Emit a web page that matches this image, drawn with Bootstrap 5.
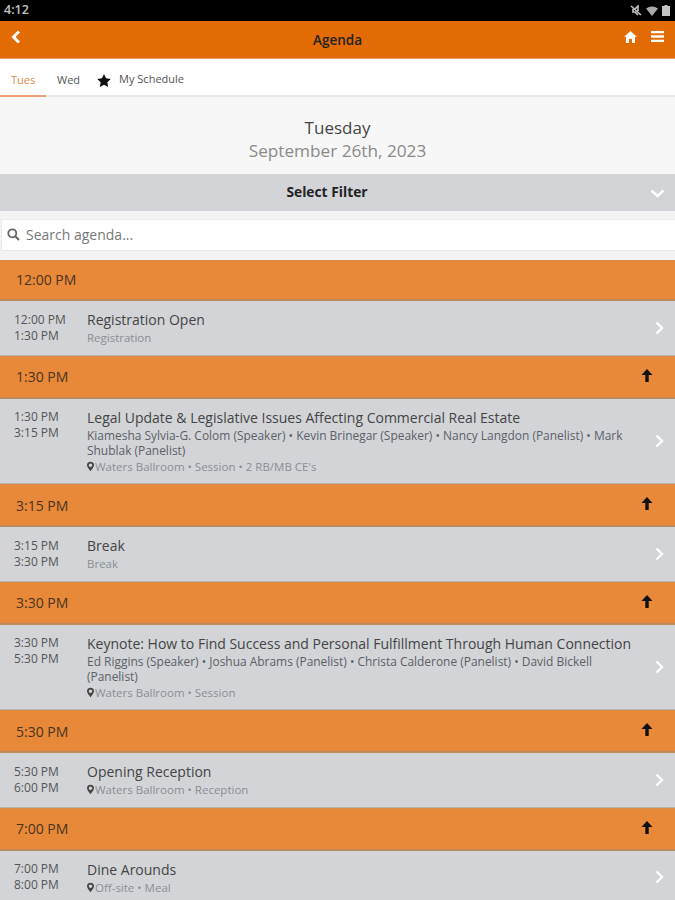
<!DOCTYPE html>
<html lang="en">
<head>
    <meta charset="UTF-8">
    <meta name="viewport" content="width=device-width, initial-scale=1.0">
    <title>Agenda</title>
    <link href="https://cdn.jsdelivr.net/npm/bootstrap@5.3.0/dist/css/bootstrap.min.css" rel="stylesheet">
    <style>
        html, body { height: 900px; overflow: hidden; }
        body { font-family: "Open Sans", "Liberation Sans", sans-serif; background: #f5f5f5; color: #333; }
        .status-strip { height: 21px; background: #000; color: #c4c4c4; font-size: 12.5px; font-weight: 600; padding: 0 5px 0 4px; }
        .app-head { height: 38px; background: #e36b03; color: #222; font-size: 13.5px; font-weight: 600; border-bottom: 1px solid #ee9f66; padding: 0 11px 6px; position: relative; }
        .app-head .head-title { position: absolute; left: 0; right: 0; text-align: center; top: 9px; line-height: 20px; }
        .tab-strip { height: 38px; background: #fff; border-bottom: 2px solid #e8e8e8; font-size: 11px; color: #555; }
        .tab-item { height: 38px; padding: 0 12px 0 11px; line-height: 41px; }
        .tab-on { width: 46px; color: #e08a4a; border-bottom: 2px solid #eb9e73; }
        .tab-star { padding-left: 5px; }
        .date-box { height: 77px; padding-top: 19px; background: #f7f7f7; text-align: center; line-height: 23px; }
        .date-day { font-size: 17px; color: #444; }
        .date-full { font-size: 17.2px; color: #8a8a8a; }
        .filter-bar { height: 37px; background: #d2d4d8; color: #222; font-size: 13.8px; font-weight: 700; padding: 0 21px 0 0; position: relative; }
        .filter-bar svg { position: absolute; right: 10px; top: 15px; }
        .search-wrap { height: 49px; padding: 8px 0 9px 1px; background: #f4f4f4; }
        .search-field { height: 32px; background: #fff; border: 1px solid #eaeaea; border-right: 0; padding: 0 5px 2px; color: #777; font-size: 14px; gap: 6px; }
        .time-band { height: 43px; background: #e8893a; border-top: 1px solid #d98a4a; border-bottom: 2px solid #bb8a5c; color: #4a3320; font-size: 14px; padding: 0 22px 0 16px; }
        .time-band.band-first { height: 41px; padding-bottom: 2px; }
        .time-band svg { margin-bottom: 3px; }
        .agenda-row { background: #d2d4d8; padding: 9px 35px 9px 14px; position: relative; border-bottom: 1px solid #b9b5ae; }
        .row-times { width: 73px; flex: none; font-size: 12px; line-height: 16px; color: #555; padding-top: 1.5px; }
        .row-title { font-size: 14px; line-height: 19px; color: #444; margin-bottom: 1px; }
        .row-sub { font-size: 11.95px; line-height: 15.5px; color: #5c5f66; }
        .row-where { font-size: 11.5px; line-height: 15.5px; color: #8b8e94; }
        .row-where svg { margin-right: 1px; margin-bottom: 2px; }
        .row-chev { position: absolute; right: 11px; top: 50%; margin-top: -7px; }
    </style>
</head>
<body>
    <div class="status-strip d-flex align-items-center justify-content-between">
        <span>4:12</span>
        <span class="d-flex align-items-center gap-1">
            <svg width="12" height="11" viewBox="0 0 12 11"><path d="M1 1l10 9M3 4h2l3-3v5M3 4v3h2l3 3" fill="none" stroke="#c4c4c4" stroke-width="1.6"/></svg>
            <svg width="12" height="10" viewBox="0 0 12 10"><path d="M0 2.500Q6-1.500 12 2.500L6 10z" fill="#aaa"/></svg>
            <svg width="8" height="11" viewBox="0 0 8 11"><path d="M2.500 0h3v1H8v10H0V1h2.500z" fill="#c4c4c4"/></svg>
        </span>
    </div>
    <div class="app-head d-flex align-items-center justify-content-between">
        <svg width="10" height="14" viewBox="0 0 10 14"><path d="M8 1.500 2.500 7 8 12.500" fill="none" stroke="#fff" stroke-width="3"/></svg>
        <span class="head-title">Agenda</span>
        <span class="d-flex align-items-center" style="gap:14px">
            <svg width="13" height="12" viewBox="0 0 13 12"><path d="M6.500 0 13 6h-2v6H8V8H5v4H2V6H0z" fill="#fff"/></svg>
            <svg width="13" height="11" viewBox="0 0 13 11"><path d="M0 1.200h13M0 5.500h13M0 9.800h13" stroke="#fff" stroke-width="2.300"/></svg>
        </span>
    </div>
    <div class="tab-strip d-flex">
        <div class="tab-item tab-on">Tues</div>
        <div class="tab-item">Wed</div>
        <div class="tab-item tab-star d-flex align-items-center gap-2">
            <svg width="14" height="13" viewBox="0 0 24 23" class="mt-1"><path d="M12 0l3.700 7.700 8.300 1.100-6.100 5.800 1.500 8.400L12 19l-7.400 4 1.500-8.400L0 8.800l8.300-1.100z" fill="#111"/></svg>
            <span>My Schedule</span>
        </div>
    </div>
    <div class="date-box">
        <div class="date-day">Tuesday</div>
        <div class="date-full">September 26th, 2023</div>
    </div>
    <div class="filter-bar d-flex align-items-center justify-content-center">
        <span>Select Filter</span>
        <svg width="15" height="9" viewBox="0 0 15 9"><path d="M1.500 1.500 7.500 7l6-5.500" fill="none" stroke="#fff" stroke-width="2.400"/></svg>
    </div>
    <div class="search-wrap">
        <div class="search-field d-flex align-items-center">
            <svg width="13" height="13" viewBox="0 0 13 13"><circle cx="5.300" cy="5.300" r="4" fill="none" stroke="#666" stroke-width="1.800"/><path d="M8.300 8.300 12 12" stroke="#666" stroke-width="2"/></svg>
            <span>Search agenda...</span>
        </div>
    </div>
    <div id="agenda"></div>

    <script src="https://cdn.jsdelivr.net/npm/bootstrap@5.3.0/dist/js/bootstrap.bundle.min.js"></script>
    <script>
        const pin = '<svg width="7" height="11" viewBox="0 0 8 11"><path d="M4 0a4 4 0 0 1 4 4c0 2-2 4-4 7-2-3-4-5-4-7a4 4 0 0 1 4-4zm0 2a2 2 0 1 0 0 4 2 2 0 0 0 0-4z" fill="#444"/></svg>';
        const chev = '<svg class="row-chev" width="9" height="14" viewBox="0 0 9 14"><path d="M1.500 1.500 7 7l-5.500 5.500" fill="none" stroke="#fff" stroke-width="2.400"/></svg>';
        const arrow = '<svg width="12" height="13" viewBox="0 0 11 13"><path d="M5.500 0 11 6H7.200v7H3.800V6H0z" fill="#111"/></svg>';

        const agenda = [
            { band: '12:00 PM', start: '12:00 PM', end: '1:30 PM', title: 'Registration Open', where: 'Registration' },
            { band: '1:30 PM', start: '1:30 PM', end: '3:15 PM', title: 'Legal Update &amp; Legislative Issues Affecting Commercial Real Estate',
              sub: 'Kiamesha Sylvia-G. Colom (Speaker) • Kevin Brinegar (Speaker) • Nancy Langdon (Panelist) • Mark Shublak (Panelist)',
              where: 'Waters Ballroom • Session • 2 RB/MB CE\'s', pin: true },
            { band: '3:15 PM', start: '3:15 PM', end: '3:30 PM', title: 'Break', where: 'Break' },
            { band: '3:30 PM', start: '3:30 PM', end: '5:30 PM', title: 'Keynote: How to Find Success and Personal Fulfillment Through Human Connection',
              sub: 'Ed Riggins (Speaker) • Joshua Abrams (Panelist) • Christa Calderone (Panelist) • David Bickell (Panelist)',
              where: 'Waters Ballroom • Session', pin: true },
            { band: '5:30 PM', start: '5:30 PM', end: '6:00 PM', title: 'Opening Reception', where: 'Waters Ballroom • Reception', pin: true },
            { band: '7:00 PM', start: '7:00 PM', end: '8:00 PM', title: 'Dine Arounds', where: 'Off-site • Meal', pin: true }
        ];

        document.getElementById('agenda').innerHTML = agenda.map((a, i) => `
            <div class="time-band d-flex align-items-center justify-content-between ${i === 0 ? 'band-first' : ''}">
                <span>${a.band}</span>${i === 0 ? '' : arrow}
            </div>
            <div class="agenda-row d-flex">
                <div class="row-times"><div>${a.start}</div><div>${a.end}</div></div>
                <div class="flex-grow-1">
                    <div class="row-title">${a.title}</div>
                    ${a.sub ? `<div class="row-sub">${a.sub}</div>` : ''}
                    <div class="row-where">${a.pin ? pin : ''}${a.where}</div>
                </div>
                ${chev}
            </div>`).join('');
    </script>
</body>
</html>
